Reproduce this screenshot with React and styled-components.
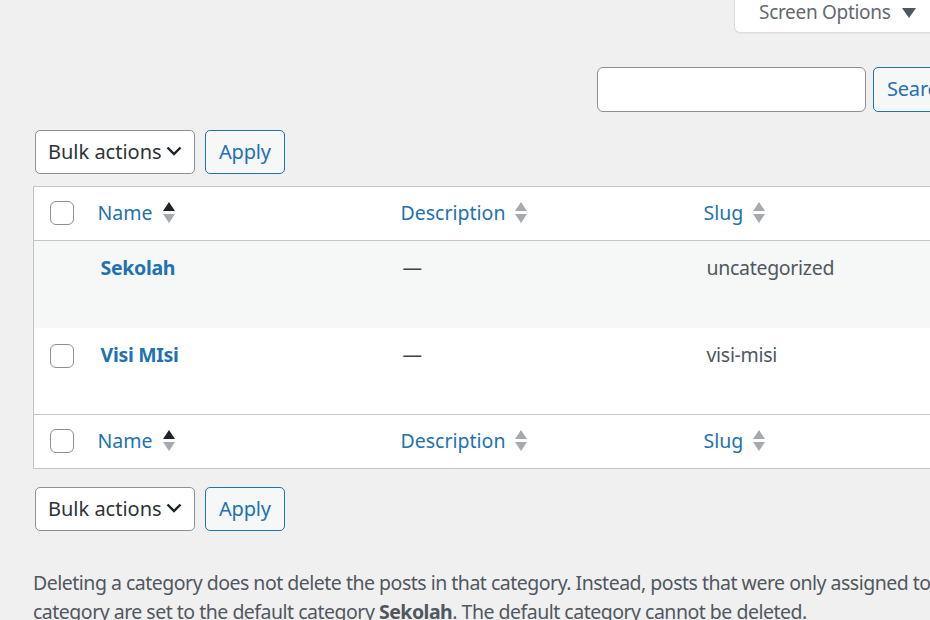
import React from 'react'
import styled, { createGlobalStyle } from 'styled-components'

const GlobalStyle = createGlobalStyle`
  html, body {
    margin: 0;
    padding: 0;
    background: #f0f0f1;
    overflow: hidden;
  }
  body {
    font-family: "Noto Sans", "Open Sans", sans-serif;
    color: #3c434a;
  }
`

const Viewport = styled.div`
  width: 930px;
  height: 620px;
  overflow: hidden;
`

const Page = styled.div`
  width: 1020px;
  padding-left: 33px;
  box-sizing: border-box;
`

const TopBar = styled.div`
  display: flex;
  justify-content: flex-end;
  padding-right: 56px;
  height: 33px;
`

const ScreenTab = styled.button`
  width: 230px;
  height: 34px;
  margin-top: -1px;
  background: #fff;
  border: 1px solid #dcdcde;
  border-top: none;
  border-radius: 0 0 6px 6px;
  box-shadow: 0 1px 1px rgba(0, 0, 0, 0.04);
  display: flex;
  align-items: center;
  gap: 11px;
  padding: 0 0 8px 24px;
  font-family: inherit;
  font-size: 19px;
  letter-spacing: -0.3px;
  color: #646970;
  cursor: pointer;
`

const TabArrow = styled.span`
  width: 0;
  height: 0;
  border-left: 7px solid transparent;
  border-right: 7px solid transparent;
  border-top: 10px solid #50575e;
  margin-top: 2px;
`

const SearchRow = styled.div`
  display: flex;
  gap: 7px;
  margin-top: 34px;
  padding-left: 564px;
`

const SearchInput = styled.input`
  flex-shrink: 0;
  width: 269px;
  height: 45px;
  box-sizing: border-box;
  border: 1.5px solid #8c8f94;
  border-radius: 6px;
  background: #fff;
`

const Button = styled.button`
  flex-shrink: 0;
  white-space: nowrap;
  height: ${p => p.$h || 44}px;
  box-sizing: border-box;
  border: 1.5px solid #2271b1;
  border-radius: 5px;
  background: #f6f7f7;
  color: #2271b1;
  font-family: inherit;
  font-size: 20px;
  letter-spacing: -0.2px;
  padding: 0 13px 2px;
  cursor: pointer;
`

const Actions = styled.div`
  display: flex;
  gap: 10px;
  margin: ${p => p.$top}px 0 0 2px;
`

const Select = styled.div`
  width: 160px;
  height: 44px;
  box-sizing: border-box;
  border: 1.5px solid #8c8f94;
  border-radius: 5px;
  background: #fff;
  display: flex;
  align-items: center;
  justify-content: space-between;
  padding: 0 12px 2px 12px;
  font-size: 20px;
  color: #2c3338;
`

const Table = styled.table`
  width: 1000px;
  border-collapse: collapse;
  border: 1.5px solid #c3c4c7;
  background: #fff;
  margin-top: 12px;
  table-layout: fixed;
`

const HeadRow = styled.tr`
  height: 54px;
  border-${p => p.$foot ? 'top' : 'bottom'}: 1.5px solid #c3c4c7;
`

const Row = styled.tr`
  height: 87px;
  background: ${p => p.$alt ? '#f6f7f7' : '#fff'};
`

const Cell = styled.td`
  vertical-align: ${p => p.$head ? 'middle' : 'top'};
  padding: ${p => p.$head ? '0 12px 1px' : '12px 12px 0'};
  font-size: 19.5px;
  line-height: 30px;
  text-align: left;
  font-weight: 400;
  letter-spacing: ${p => p.$head ? '0' : '-0.3px'};
  color: ${p => p.$muted ? '#50575e' : '#3c434a'};
`

const CheckCell = styled.td`
  width: 52px;
  padding: ${p => p.$head ? '0 0 1px 16px' : '16px 0 0 16px'};
  vertical-align: ${p => p.$head ? 'middle' : 'top'};
  box-sizing: border-box;
`

const Check = styled.span`
  display: block;
  width: 24px;
  height: 24px;
  box-sizing: border-box;
  border: 1.5px solid #8c8f94;
  border-radius: 6px;
  background: #fff;
`

const SortLink = styled.a`
  display: inline-flex;
  align-items: center;
  gap: 9px;
  color: #2271b1;
  text-decoration: none;
  font-size: 19.5px;
`

const Title = styled.a`
  display: inline-block;
  color: #2271b1;
  font-weight: 700;
  text-decoration: none;
  padding-left: 3px;
`

const Dash = styled.span`
  padding-left: 2px;
`

const Slug = styled.span`
  padding-left: 3px;
`

const Note = styled.p`
  margin: 37px 0 0;
  font-size: 19.5px;
  line-height: 29px;
  color: #50575e;
  width: 1070px;
  letter-spacing: -0.5px;
`

const SortIcon = ({ active }) => (
  <svg width="14" height="24" viewBox="0 0 14 24">
    <path d="M7 1 L13 10 L1 10 Z" fill={active ? '#1d2327' : '#a7aaad'} />
    <path d="M1 13 L13 13 L7 22 Z" fill="#a7aaad" />
  </svg>
)

const Chevron = () => (
  <svg width="16" height="10" viewBox="0 0 16 10">
    <path d="M1.5 1.5 L8 8 L14.5 1.5" fill="none" stroke="#1d2327" strokeWidth="2.4" />
  </svg>
)

const BulkActions = ({ top }) => (
  <Actions $top={top}>
    <Select>
      Bulk actions
      <Chevron />
    </Select>
    <Button>Apply</Button>
  </Actions>
)

const HeaderCells = () => (
  <>
    <CheckCell as="th" $head><Check /></CheckCell>
    <Cell as="th" $head>
      <SortLink href="#">Name <SortIcon active /></SortLink>
    </Cell>
    <Cell as="th" $head>
      <SortLink href="#">Description <SortIcon /></SortLink>
    </Cell>
    <Cell as="th" $head>
      <SortLink href="#">Slug <SortIcon /></SortLink>
    </Cell>
  </>
)

const App = () => {
  const rows = [
    { name: 'Sekolah', slug: 'uncategorized', check: false },
    { name: 'Visi MIsi', slug: 'visi-misi', check: true },
  ]
  return (
    <Viewport>
      <GlobalStyle />
      <Page>
        <TopBar>
          <ScreenTab>Screen Options <TabArrow /></ScreenTab>
        </TopBar>
        <SearchRow>
          <SearchInput />
          <Button $h={45}>Search Categories</Button>
        </SearchRow>
        <BulkActions top={18} />
        <Table>
          <colgroup>
            <col style={{ width: 52 }} />
            <col style={{ width: 303 }} />
            <col style={{ width: 303 }} />
            <col />
          </colgroup>
          <thead>
            <HeadRow><HeaderCells /></HeadRow>
          </thead>
          <tbody>
            {rows.map((r, i) => (
              <Row key={r.name} $alt={i % 2 === 0}>
                <CheckCell>{r.check && <Check />}</CheckCell>
                <Cell><Title href="#">{r.name}</Title></Cell>
                <Cell><Dash>—</Dash></Cell>
                <Cell $muted><Slug>{r.slug}</Slug></Cell>
              </Row>
            ))}
          </tbody>
          <tfoot>
            <HeadRow $foot><HeaderCells /></HeadRow>
          </tfoot>
        </Table>
        <BulkActions top={18} />
        <Note>
          Deleting a category does not delete the posts in that category. Instead, posts that were only assigned to the deleted
          category are set to the default category <strong>Sekolah</strong>. The default category cannot be deleted.
        </Note>
      </Page>
    </Viewport>
  )
}

export default App
